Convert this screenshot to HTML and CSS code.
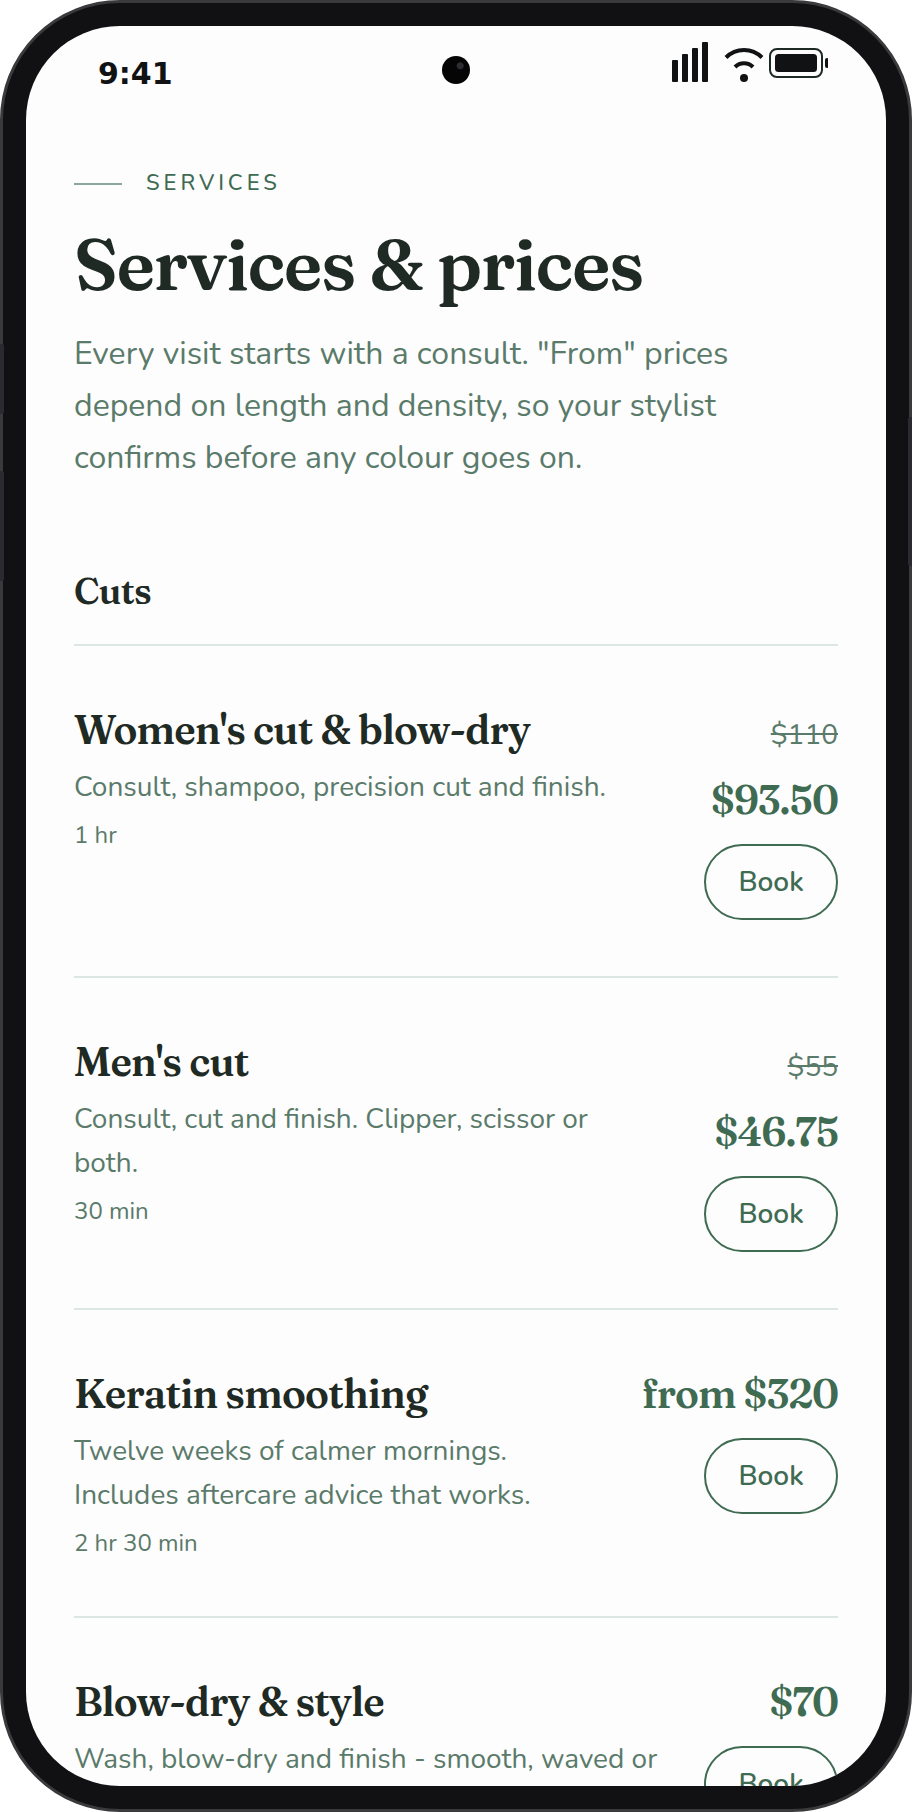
FILE: index.html
```html
<!DOCTYPE html>
<html lang="en">
<head>
<meta charset="utf-8">
<title>Services &amp; prices</title>
<link rel="stylesheet" href="styles.css">
</head>
<body>
<div class="phone">
  <span class="btn btn-l1"></span>
  <span class="btn btn-l2"></span>
  <span class="btn btn-r1"></span>
  <div class="screen">
    <span class="camera"></span>
    <div class="status">
      <span class="time">9:41</span>
      <svg class="status-icons" width="156" height="42" viewBox="0 0 156 42" aria-hidden="true">
        <g fill="#111214">
          <rect x="0" y="18" width="6" height="22" rx="1"/>
          <rect x="10" y="12" width="6" height="28" rx="1"/>
          <rect x="20" y="6" width="6" height="34" rx="1"/>
          <rect x="30" y="0" width="6" height="40" rx="1"/>
          <circle cx="72" cy="36" r="4"/>
        </g>
        <g fill="none" stroke="#111214" stroke-width="4">
          <path d="M54 15.500C64 5.500 80 5.500 90 15.500"/>
          <path d="M63 25C68 20 76 20 81 25"/>
        </g>
        <rect x="98" y="7" width="52" height="28" rx="7" fill="none" stroke="#1d2a23" stroke-width="2"/>
        <rect x="103" y="12" width="42" height="18" rx="3.500" fill="#111214"/>
        <rect x="153" y="16" width="4" height="10" rx="2" fill="#111214"/>
      </svg>
    </div>
    <main class="content">
      <div class="eyebrow"><span class="eyebrow-line"></span><span>SERVICES</span></div>
      <h1 class="title">Services &amp; prices</h1>
      <p class="lead">Every visit starts with a consult. "From" prices depend on length and density, so your stylist confirms before any colour goes on.</p>
      <h2 class="section">Cuts</h2>
      <article class="item">
        <div class="info">
          <h3 class="name">Women's cut &amp; blow-dry</h3>
          <p class="desc">Consult, shampoo, precision cut and finish.</p>
          <p class="time-note">1 hr</p>
        </div>
        <div class="side">
          <s class="old">$110</s>
          <span class="price">$93.50</span>
          <a class="book">Book</a>
        </div>
      </article>
      <article class="item">
        <div class="info">
          <h3 class="name">Men's cut</h3>
          <p class="desc">Consult, cut and finish. Clipper, scissor or both.</p>
          <p class="time-note">30 min</p>
        </div>
        <div class="side">
          <s class="old">$55</s>
          <span class="price">$46.75</span>
          <a class="book">Book</a>
        </div>
      </article>
      <article class="item">
        <div class="info">
          <h3 class="name">Keratin smoothing</h3>
          <p class="desc">Twelve weeks of calmer mornings. Includes aftercare advice that works.</p>
          <p class="time-note">2 hr 30 min</p>
        </div>
        <div class="side">
          <span class="price">from $320</span>
          <a class="book">Book</a>
        </div>
      </article>
      <article class="item">
        <div class="info">
          <h3 class="name">Blow-dry &amp; style</h3>
          <p class="desc">Wash, blow-dry and finish - smooth, waved or curled.</p>
        </div>
        <div class="side">
          <span class="price">$70</span>
          <a class="book">Book</a>
        </div>
      </article>
    </main>
  </div>
</div>
</body>
</html>
```
FILE: styles.css
```css
* { box-sizing: border-box; }
html, body { margin: 0; padding: 0; background: #fff; }
.phone {
  position: relative;
  width: 912px;
  height: 1812px;
  padding: 23px;
  background: #111113;
  border: 3px solid #3a3a3c;
  border-radius: 120px;
}
.btn { position: absolute; width: 4px; background: #2a2b30; }
.btn-l1 { left: -3px; top: 341px; height: 70px; border-radius: 0 2px 2px 0; }
.btn-l2 { left: -3px; top: 468px; height: 110px; border-radius: 0 2px 2px 0; }
.btn-r1 { right: -3px; top: 414px; height: 149px; border-radius: 2px 0 0 2px; }
.screen {
  position: relative;
  height: 100%;
  overflow: hidden;
  background: #fdfdfd;
  border-radius: 94px;
}
.camera {
  position: absolute;
  left: 416px;
  top: 30px;
  width: 28px;
  height: 28px;
  border-radius: 50%;
  background: radial-gradient(circle at 65% 35%, #2c2d31 0 3px, #050506 4px);
}
.status {
  display: flex;
  justify-content: space-between;
  align-items: flex-start;
  padding: 16px 58px 0 72px;
  height: 104px;
}
.time {
  margin-top: 10px;
  font: 700 30px/44px "DejaVu Sans", sans-serif;
  color: #111214;
}
.status-icons { display: block; }
.content { padding: 38px 48px 0; }
.eyebrow {
  display: flex;
  align-items: center;
  gap: 24px;
  font: 500 22px/30px "Nunito", "Noto Sans", sans-serif;
  letter-spacing: 3.96px;
  color: #3f6b53;
}
.eyebrow-line { width: 48px; height: 2px; margin-top: 2px; background: #8aa89a; }
.title {
  margin: 24px 0 0;
  font: 600 72px/84px "Fraunces", "Liberation Serif", serif;
  letter-spacing: -1.44px;
  color: #1f2a24;
}
.lead {
  margin: 22px 0 0;
  max-width: 680px;
  font: 400 32px/52px "Nunito", "Noto Sans", sans-serif;
  color: #5a7a6a;
}
.section {
  margin: 83px 0 0;
  padding-bottom: 29px;
  font: 600 36px/48px "Fraunces", "Liberation Serif", serif;
  letter-spacing: -0.72px;
  color: #1f2a24;
  border-bottom: 2px solid #dbe7e0;
}
.item {
  display: flex;
  justify-content: space-between;
  gap: 46px;
  padding: 56px 0;
  border-bottom: 2px solid #dbe7e0;
}
.info { flex: 1; min-width: 0; }
.name {
  margin: 0;
  font: 600 40px/56px "Fraunces", "Liberation Serif", serif;
  letter-spacing: -0.8px;
  color: #1f2a24;
}
.desc {
  margin: 7px 0 0;
  font: 400 28px/44px "Nunito", "Noto Sans", sans-serif;
  color: #5a7a6a;
}
.time-note {
  margin: 9px 0 0;
  font: 400 24px/34px "Nunito", "Noto Sans", sans-serif;
  color: #5a7a6a;
}
.side {
  display: flex;
  flex-direction: column;
  align-items: flex-end;
  flex: none;
}
.old {
  font: 400 28px/66px "Nunito", "Noto Sans", sans-serif;
  color: #5a7a6a;
}
.price {
  font: 600 40px/56px "Fraunces", "Liberation Serif", serif;
  letter-spacing: -1px;
  color: #3f6b53;
}
.old + .price { margin-top: 4px; }
.book {
  margin-top: 16px;
  padding: 0;
  width: 134px;
  height: 76px;
  display: flex;
  align-items: center;
  justify-content: center;
  border: 2px solid #3f6b53;
  border-radius: 38px;
  font: 600 28px/1 "Nunito", "Noto Sans", sans-serif;
  color: #3f6b53;
}
```
